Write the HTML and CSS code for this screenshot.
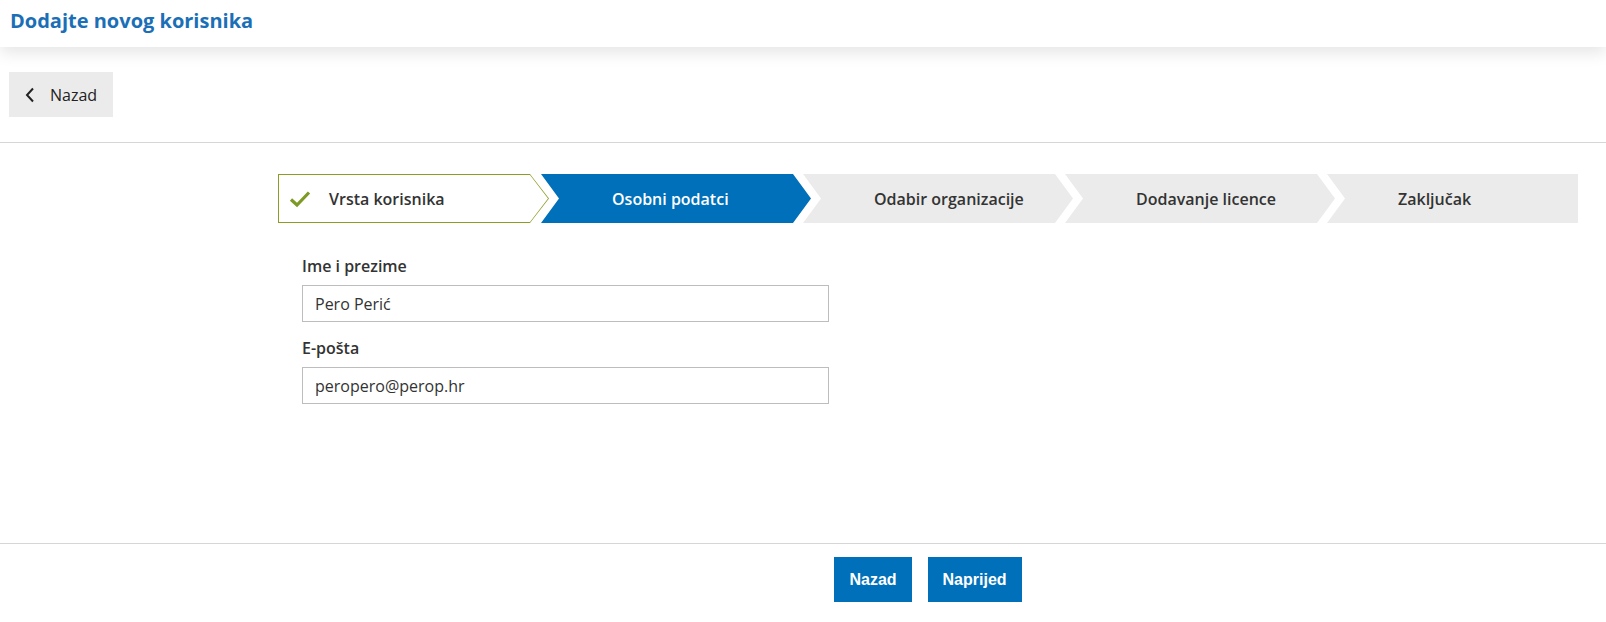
FILE: index.html
```html
<!DOCTYPE html>
<html>
  <head>
    <title>Dodajte novog korisnika</title>
    <link rel="stylesheet" href="styles.css">
  </head>
  <body>
    <header class="page-header">
      <h1 class="page-title">Dodajte novog korisnika</h1>
    </header>

    <div class="toolbar">
      <button class="back-button">
        <svg class="back-icon" width="10" height="16" viewBox="0 0 10 16">
          <path d="M8 1.5 L2 8 L8 14.5" fill="none" stroke="#222" stroke-width="2"/>
        </svg>
        Nazad
      </button>
    </div>

    <main class="wizard">
      <ol class="steps">
        <li class="step step-done">
          <svg class="check-icon" width="22" height="18" viewBox="0 0 22 18">
            <path d="M2 9.5 L8 15 L20 2.5" fill="none" stroke="#7d9a24" stroke-width="3.2"/>
          </svg>
          <span>Vrsta korisnika</span>
        </li>
        <li class="step step-active"><span>Osobni podatci</span></li>
        <li class="step"><span>Odabir organizacije</span></li>
        <li class="step"><span>Dodavanje licence</span></li>
        <li class="step step-last"><span>Zaključak</span></li>
      </ol>

      <form class="user-form">
        <div class="field">
          <label for="full-name">Ime i prezime</label>
          <input type="text" id="full-name" value="Pero Perić">
        </div>
        <div class="field">
          <label for="email">E-pošta</label>
          <input type="text" id="email" value="peropero@perop.hr">
        </div>
      </form>
    </main>

    <footer class="form-actions">
      <div class="actions-inner">
        <button class="btn-primary">Nazad</button>
        <button class="btn-primary">Naprijed</button>
      </div>
    </footer>
  </body>
</html>
```

FILE: styles.css
```css
/* Page */
body {
  margin: 0;
  font-family: "Open Sans", "DejaVu Sans", sans-serif;
  color: #333;
  background: #fff;
}

/* Header */
.page-header {
  height: 47px;
  background: #fff;
  box-shadow: 0 6px 16px rgba(0, 0, 0, 0.1);
  position: relative;
  z-index: 1;
}

.page-title {
  margin: 0;
  padding: 8px 0 0 10px;
  font-size: 20px;
  font-weight: bold;
  line-height: 26px;
  color: #1b6fb6;
}

/* Toolbar with back button */
.toolbar {
  padding: 25px 9px;
  border-bottom: 1px solid #d6d6d6;
}

.back-button {
  display: flex;
  align-items: center;
  gap: 15px;
  height: 45px;
  padding: 0 16px 0 16px;
  border: none;
  background-color: #ebebeb;
  font-family: "Open Sans", sans-serif;
  font-size: 16px;
  color: #222;
  cursor: pointer;
}

/* Wizard */
.wizard {
  min-height: 400px;
  box-sizing: border-box;
  padding: 31px 28px 0 278px;
}

.steps {
  display: flex;
  list-style: none;
  margin: 0;
  padding: 0;
}

.step {
  position: relative;
  display: flex;
  align-items: center;
  width: 270px;
  height: 49px;
  margin-right: -8px;
  padding-left: 71px;
  box-sizing: border-box;
  background-color: #ebebeb;
  font-size: 16px;
  font-weight: 600;
  color: #333;
  clip-path: polygon(0 0, calc(100% - 18px) 0, 100% 50%, calc(100% - 18px) 100%, 0 100%, 18px 50%);
}

.step span {
  position: relative;
}

.step-active {
  background-color: #0070ba;
  color: #fff;
}

.step-done {
  width: 271px;
  padding-left: 11px;
  background-color: #8c9c26;
  clip-path: polygon(0 0, calc(100% - 19px) 0, 100% 50%, calc(100% - 19px) 100%, 0 100%);
}

.step-done::before {
  content: "";
  position: absolute;
  top: 1px;
  left: 1px;
  right: 1px;
  bottom: 1px;
  background: #fff;
  clip-path: polygon(0 0, calc(100% - 18px) 0, 100% 50%, calc(100% - 18px) 100%, 0 100%);
}

.check-icon {
  position: relative;
  margin-right: 18px;
}

.step-last {
  flex: 1;
  margin-right: 0;
  clip-path: polygon(0 0, 100% 0, 100% 100%, 0 100%, 18px 50%);
}

/* Form */
.user-form {
  padding: 32px 0 0 24px;
}

.field {
  display: flex;
  flex-direction: column;
  margin-bottom: 15px;
}

.field label {
  font-size: 16px;
  font-weight: 600;
  line-height: 22px;
  color: #333;
  margin-bottom: 8px;
}

.field input {
  width: 527px;
  height: 37px;
  box-sizing: border-box;
  padding: 0 12px;
  border: 1px solid #bdbdbd;
  font-family: "Open Sans", sans-serif;
  font-size: 16px;
  color: #333;
}

/* Footer */
.form-actions {
  border-top: 1px solid #d6d6d6;
  padding: 13px 28px 0 278px;
}

.actions-inner {
  display: flex;
  justify-content: center;
  gap: 16px;
}

.btn-primary {
  height: 45px;
  padding: 0 15px;
  border: none;
  background-color: #0070ba;
  color: white;
  font-family: "Liberation Sans", Arial, sans-serif;
  font-size: 16px;
  font-weight: bold;
  cursor: pointer;
}
```
